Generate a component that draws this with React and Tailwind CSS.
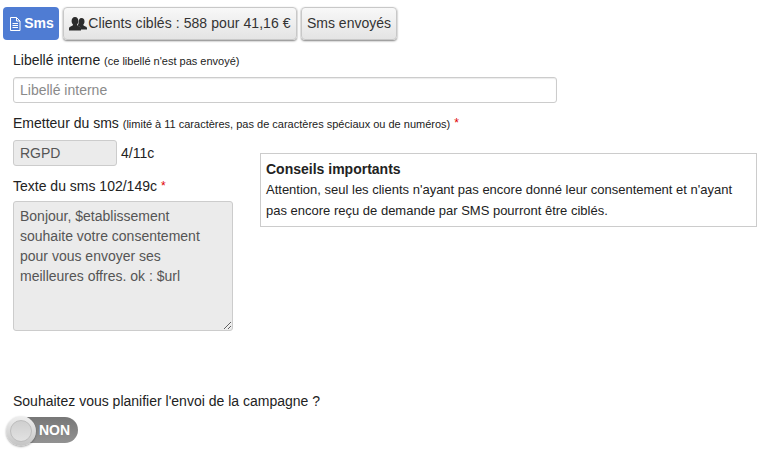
import React from "react";

const tabGris =
  "h-[33px] flex items-center rounded-[4px] border border-[#c8c8c8] bg-gradient-to-b from-[#f8f8f8] to-[#e4e4e4] text-[#333] shadow-[0_1px_2px_rgba(0,0,0,0.5)]";

function IconeDoc() {
  return (
    <svg width="14" height="16" viewBox="0 0 14 16" fill="none" stroke="white" strokeWidth="1">
      <path d="M2.5 1.5h6l3.5 3.500v9.500h-9.500z" />
      <path d="M8.5 1.500v3.500h3.500M4.500 7.500h5.500M4.500 9.500h5.500M4.500 11.500h5.500" />
    </svg>
  );
}

function IconeClients() {
  return (
    <svg width="18" height="15" viewBox="0 0 18 15" fill="#2b2b2b">
      <path d="M12.5 2c2 0 3 1.500 3 3.500 0 1.300-.5 2.400-1.200 3 0 .8.400 1.100 1.200 1.400 1.200.5 2.500 1 2.500 2.100v1.500h-6c0-1.800-1-2.600-2.500-3.300-.7-.3-.9-.6-.9-1.100.8-.7 1-1.500 1-2.600 0-2.500 .9-4.500 2.900-4.500z" />
      <path d="M6 1c2.200 0 3.400 1.700 3.400 4 0 1.500-.5 2.800-1.400 3.500 0 .9.500 1.300 1.400 1.600 1.400.6 2.600 1.200 2.600 2.400V14.500H0v-2c0-1.200 1.300-1.800 2.600-2.400.9-.3 1.400-.7 1.400-1.600C3.100 7.800 2.600 6.500 2.600 5 2.600 2.700 3.800 1 6 1z" />
    </svg>
  );
}

function App() {
  return (
    <div className="w-[762px] h-[449px] overflow-hidden bg-white text-[14px] text-[#222] font-['Liberation_Sans',Arial,sans-serif]">
      {/* onglets */}
      <div className="flex gap-1 pl-[3px] pt-[7px]">
        <button className="h-[33px] w-[56px] flex items-center justify-center gap-[2px] rounded-[4px] bg-[#4f7cd3] text-white font-bold">
          <IconeDoc />
          Sms
        </button>
        <button className={tabGris + " w-[234px] justify-center gap-[1px] tracking-[0.07px]"}>
          <IconeClients />
          Clients ciblés : 588 pour 41,16 €
        </button>
        <button className={tabGris + " w-[96px] justify-center"}>Sms envoyés</button>
      </div>

      <div className="pl-[13px] pr-[5px]">
        <label className="block mt-[12px] h-[16px] leading-[16px]">
          Libellé interne <span className="text-[11px]">(ce libellé n'est pas envoyé)</span>
        </label>
        <input
          placeholder="Libellé interne"
          className="block mt-[9px] w-[544px] h-[26px] px-[6px] rounded-[3px] border border-[#ccc] placeholder:text-[#8a8a8a] shadow-[inset_0_1px_1px_rgba(0,0,0,0.08)]"
        />

        <label className="block mt-[12px] h-[16px] leading-[16px]">
          Emetteur du sms{" "}
          <span className="text-[11px]">(limité à 11 caractères, pas de caractères spéciaux ou de numéros)</span>{" "}
          <span className="text-[#e00000] text-[12px] align-top">*</span>
        </label>

        <div className="flex">
          <div className="w-[247px] shrink-0">
            <div className="flex items-center mt-[9px]">
              <div className="w-[104px] h-[26px] flex items-center px-[6px] rounded-[3px] border border-[#ccc] bg-[#ebebeb] text-[#555]">
                RGPD
              </div>
              <span className="ml-1">4/11c</span>
            </div>
            <label className="block mt-[12px] h-[16px] leading-[16px]">
              Texte du sms 102/149c <span className="text-[#e00000] text-[12px] align-top">*</span>
            </label>
            <textarea
              readOnly
              value={"Bonjour, $etablissement souhaite votre consentement pour vous envoyer ses meilleures offres. ok : $url"}
              className="block mt-[7px] w-[220px] h-[130px] px-[6px] py-[4px] leading-[20px] rounded-[3px] border border-[#ccc] bg-[#ebebeb] text-[#555] outline-none"
            />
          </div>

          <div className="mt-[22px] w-[497px] h-[74px] border border-[#ccc] px-[5px] pt-[7px] text-[13px] leading-[21px]">
            <div className="text-[14px] leading-[16px] font-bold text-[#222] mb-[2px]">Conseils importants</div>
            Attention, seul les clients n'ayant pas encore donné leur consentement et n'ayant pas encore reçu de demande par SMS pourront être ciblés.
          </div>
        </div>

        <p className="mt-[62px] h-[16px] leading-[16px]">Souhaitez vous planifier l'envoi de la campagne ?</p>
      </div>

      {/* interrupteur */}
      <div className="relative ml-[6px] mt-[7px] w-[72px] h-[28px]">
        <div className="absolute left-[2px] top-[1px] w-[70px] h-[26px] rounded-full bg-gradient-to-b from-[#777] to-[#929292] flex items-center justify-end pr-[8px] text-white font-bold">
          NON
        </div>
        <div className="absolute left-0 top-0 w-[30px] h-[30px] rounded-full p-[4px] bg-gradient-to-b from-[#efefef] to-[#c4c4c4] shadow-[0_1px_2px_rgba(0,0,0,0.35)]">
          <div className="w-full h-full rounded-full border border-[#bdbdbd] bg-gradient-to-b from-[#cfcfcf] to-[#e2e2e2]" />
        </div>
      </div>
    </div>
  );
}

export default App;
